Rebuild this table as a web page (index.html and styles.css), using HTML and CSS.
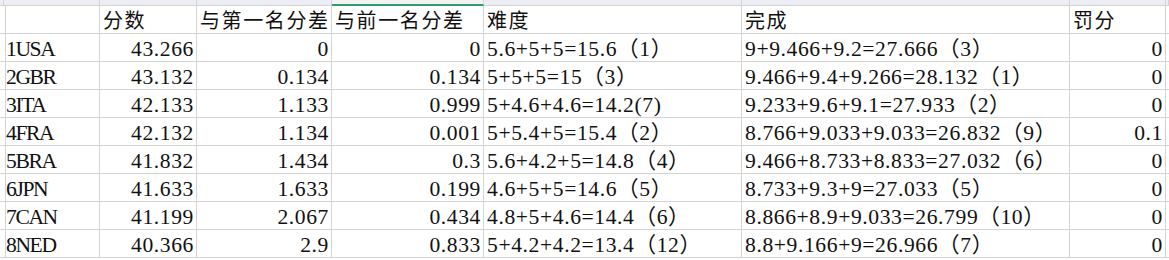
FILE: index.html
```html
<!DOCTYPE html>
<html lang="zh">
<head>
<meta charset="utf-8">
<title>Sheet</title>
<link rel="stylesheet" href="styles.css">
</head>
<body>
<div class="sheet">
  <div class="t"></div><div class="t"></div><div class="t"></div><div class="t"></div><div class="t sel"></div><div class="t"></div><div class="t"></div><div class="t"></div><div class="t"></div>

  <div class="c"></div><div class="c"></div><div class="c hd">分数</div><div class="c hd">与第一名分差</div><div class="c hd">与前一名分差</div><div class="c hd">难度</div><div class="c hd">完成</div><div class="c hd">罚分</div><div class="c"></div>

  <div class="c"></div><div class="c lb">1USA</div><div class="c n">43.266</div><div class="c n">0</div><div class="c n">0</div><div class="c">5.6+5+5=15.6（1）</div><div class="c">9+9.466+9.2=27.666（3）</div><div class="c n">0</div><div class="c"></div>

  <div class="c"></div><div class="c lb">2GBR</div><div class="c n">43.132</div><div class="c n">0.134</div><div class="c n">0.134</div><div class="c">5+5+5=15（3）</div><div class="c">9.466+9.4+9.266=28.132（1）</div><div class="c n">0</div><div class="c"></div>

  <div class="c"></div><div class="c lb">3ITA</div><div class="c n">42.133</div><div class="c n">1.133</div><div class="c n">0.999</div><div class="c">5+4.6+4.6=14.2(7)</div><div class="c">9.233+9.6+9.1=27.933（2）</div><div class="c n">0</div><div class="c"></div>

  <div class="c"></div><div class="c lb">4FRA</div><div class="c n">42.132</div><div class="c n">1.134</div><div class="c n">0.001</div><div class="c">5+5.4+5=15.4（2）</div><div class="c">8.766+9.033+9.033=26.832（9）</div><div class="c n">0.1</div><div class="c"></div>

  <div class="c"></div><div class="c lb">5BRA</div><div class="c n">41.832</div><div class="c n">1.434</div><div class="c n">0.3</div><div class="c">5.6+4.2+5=14.8（4）</div><div class="c">9.466+8.733+8.833=27.032（6）</div><div class="c n">0</div><div class="c"></div>

  <div class="c"></div><div class="c lb">6JPN</div><div class="c n">41.633</div><div class="c n">1.633</div><div class="c n">0.199</div><div class="c">4.6+5+5=14.6（5）</div><div class="c">8.733+9.3+9=27.033（5）</div><div class="c n">0</div><div class="c"></div>

  <div class="c"></div><div class="c lb">7CAN</div><div class="c n">41.199</div><div class="c n">2.067</div><div class="c n">0.434</div><div class="c">4.8+5+4.6=14.4（6）</div><div class="c">8.866+8.9+9.033=26.799（10）</div><div class="c n">0</div><div class="c"></div>

  <div class="c"></div><div class="c lb">8NED</div><div class="c n">40.366</div><div class="c n">2.9</div><div class="c n">0.833</div><div class="c">5+4.2+4.2=13.4（12）</div><div class="c">8.8+9.166+9=26.966（7）</div><div class="c n">0</div><div class="c"></div>
</div>
</body>
</html>
```

FILE: styles.css
```css
html, body {
  margin: 0;
  padding: 0;
  background: #ffffff;
}

.sheet {
  display: grid;
  grid-template-columns: 4px 96px 97px 135px 152px 258px 328px 96px 3px;
  grid-template-rows: 6px;
  grid-auto-rows: 28px;
  width: 1169px;
  font-family: "Liberation Serif", "Noto Sans CJK SC", serif;
  font-size: 21.6px;
  letter-spacing: 0.6px;
  color: #111111;
}

.t {
  box-sizing: border-box;
  background: #ededf6;
  border-right: 1px solid #d4d4d4;
  border-bottom: 1px solid #d4d4d4;
}

.t.sel {
  background: #f3f3f3;
  border-bottom: 2px solid #2e9e72;
}

.c {
  box-sizing: border-box;
  border-right: 1px solid #d4d4d4;
  border-bottom: 1px solid #d4d4d4;
  padding: 4px 2px 0 3px;
  line-height: 22px;
  white-space: nowrap;
}

.lb {
  letter-spacing: -1.4px;
  padding-left: 2px;
}

.n {
  text-align: right;
}

.hd {
  font-family: "Noto Sans CJK SC", sans-serif;
  font-size: 20px;
  letter-spacing: 1.6px;
  padding-top: 3px;
  padding-left: 3px;
}
```
